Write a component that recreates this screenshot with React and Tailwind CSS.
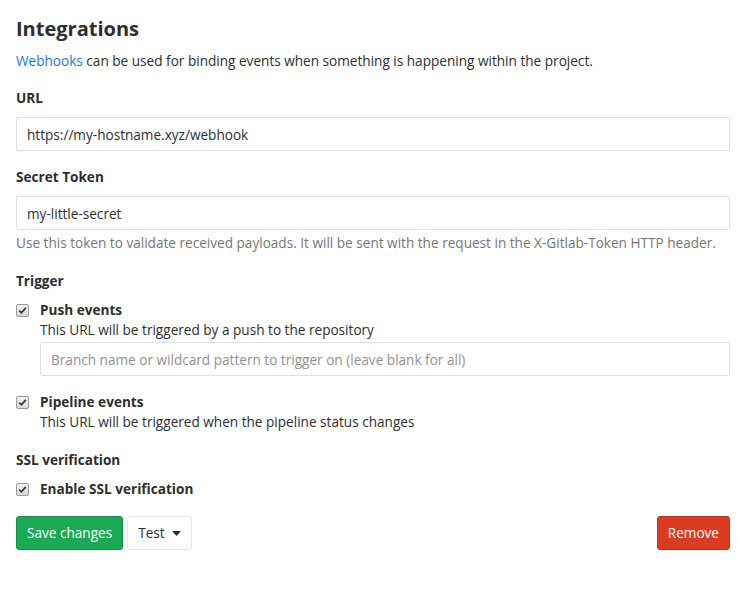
import { useState } from 'react'

function Check({ checked, onChange }) {
    return (
        <button
            type="button"
            onClick={onChange}
            className="w-[13px] h-[13px] shrink-0 rounded-[2px] border border-[#9a9a9a] bg-gradient-to-b from-[#f2f2f2] to-[#d9d9d9] flex items-center justify-center"
        >
            {checked && (
                <svg width="9" height="9" viewBox="0 0 9 9">
                    <path d="M1.2 4.6 L3.4 6.8 L7.8 1.8" fill="none" stroke="#3a3a3a" strokeWidth="1.8" />
                </svg>
            )}
        </button>
    )
}

function TriggerOption({ title, desc, checked, onChange, children }) {
    return (
        <div className="flex gap-[11px]">
            <div className="h-5 flex items-center">
                <Check checked={checked} onChange={onChange} />
            </div>
            <div className="flex-1">
                <div className="font-bold leading-5">{title}</div>
                {desc && <div className="leading-5">{desc}</div>}
                {children}
            </div>
        </div>
    )
}

const inputCls = 'w-full h-[34px] border border-[#dfdfdf] rounded-[2px] px-[10px] text-[13.6px] text-[#2e2e2e] placeholder:text-[#919191] outline-none'

export default function App() {
    const [push, setPush] = useState(true)
    const [pipeline, setPipeline] = useState(true)
    const [ssl, setSsl] = useState(true)

    return (
        <div className="px-4 pt-[17px] bg-white min-h-[590px] text-[13.6px] text-[#2e2e2e] font-['Open_Sans',sans-serif]">
            <h3 className="text-[20px] font-bold leading-6">Integrations</h3>
            <p className="mt-[10px] leading-5">
                <a href="#" className="text-[#1f78d1]">Webhooks</a> can be used for binding events when something is happening within the project.
            </p>

            <label className="block mt-[17px] font-bold leading-5">URL</label>
            <input className={`${inputCls} mt-[9px]`} defaultValue="https://my-hostname.xyz/webhook" />

            <label className="block mt-4 font-bold leading-5">Secret Token</label>
            <input className={`${inputCls} mt-[9px]`} defaultValue="my-little-secret" />
            <p className="mt-1 leading-[18px] text-[#767676]">
                Use this token to validate received payloads. It will be sent with the request in the X-Gitlab-Token HTTP header.
            </p>

            <div className="mt-[19px] font-bold leading-5">Trigger</div>
            <div className="mt-[9px]">
                <TriggerOption
                    title="Push events"
                    desc="This URL will be triggered by a push to the repository"
                    checked={push}
                    onChange={() => setPush(!push)}
                >
                    <input className={`${inputCls} mt-[2px]`} placeholder="Branch name or wildcard pattern to trigger on (leave blank for all)" />
                </TriggerOption>
            </div>
            <div className="mt-4">
                <TriggerOption
                    title="Pipeline events"
                    desc="This URL will be triggered when the pipeline status changes"
                    checked={pipeline}
                    onChange={() => setPipeline(!pipeline)}
                />
            </div>

            <div className="mt-[18px] font-bold leading-5">SSL verification</div>
            <div className="mt-[9px]">
                <TriggerOption title="Enable SSL verification" checked={ssl} onChange={() => setSsl(!ssl)} />
            </div>

            <div className="mt-[17px] flex items-center">
                <button className="h-[34px] px-[10px] rounded-[3px] border border-[#168f48] bg-[#1aaa55] text-white">
                    Save changes
                </button>
                <button className="ml-1 h-[34px] px-[10px] rounded-[3px] border border-[#e5e5e5] bg-white text-[#2e2e2e] flex items-center gap-[7px]">
                    Test
                    <svg width="9" height="5" viewBox="0 0 9 5">
                        <path d="M0 0 H9 L4.5 5 Z" fill="#2e2e2e" />
                    </svg>
                </button>
                <button className="ml-auto h-[34px] px-[10px] rounded-[3px] border border-[#c0341d] bg-[#db3b21] text-white">
                    Remove
                </button>
            </div>
        </div>
    )
}
